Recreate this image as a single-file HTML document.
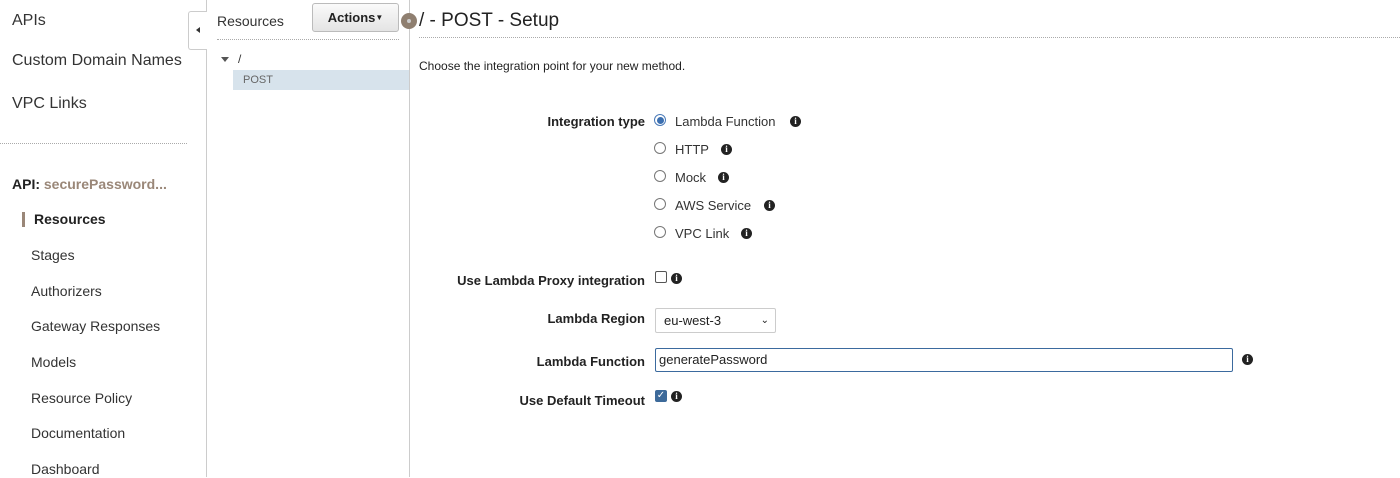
<!DOCTYPE html>
<html><head><meta charset="utf-8"><style>
*{margin:0;padding:0;box-sizing:border-box}
body{width:1400px;height:477px;overflow:hidden;background:#fff;font-family:"Liberation Sans",Arial,sans-serif;color:#222;position:relative}
.a{position:absolute;white-space:nowrap}
.nav{font-size:16px;line-height:20px;left:12px;color:#333}
.sub{font-size:14px;line-height:18px;left:31px;color:#333}
.lbl{font-size:13px;font-weight:bold;line-height:16px;right:755px;color:#222}
.opt{font-size:13px;line-height:16px;left:675px;color:#333}
.radio{position:absolute;width:12px;height:12px;border:1px solid #777;border-radius:50%;background:#fff;left:654px}
.info{position:absolute;width:11px;height:11px;border-radius:50%;background:#222;color:#fff;font-size:9px;font-weight:bold;line-height:11px;text-align:center;font-family:"Liberation Serif",serif}
</style></head><body>
<div class="a" style="left:206px;top:0;width:1px;height:477px;background:#ccc"></div>
<div class="a" style="left:188px;top:11px;width:19px;height:39px;border:1px solid #ccc;border-right:none;border-radius:3px 0 0 3px;background:#fff"></div>
<div class="a" style="left:196px;top:27px;width:0;height:0;border-top:3px solid transparent;border-bottom:3px solid transparent;border-right:4px solid #333"></div>
<div class="a nav" style="top:11px">APIs</div>
<div class="a nav" style="top:51px">Custom Domain Names</div>
<div class="a nav" style="top:94px">VPC Links</div>
<div class="a" style="left:0;top:143px;width:187px;border-top:1px dotted #aaa"></div>
<div class="a" style="left:12px;top:175px;font-size:14px;font-weight:bold;line-height:18px">API: <span style="color:#9a8778">securePassword...</span></div>
<div class="a" style="left:22px;top:212px;width:3px;height:15px;background:#9a8778"></div>
<div class="a sub" style="left:34px;top:210px;font-weight:bold;color:#222">Resources</div>
<div class="a sub" style="top:246px">Stages</div>
<div class="a sub" style="top:282px">Authorizers</div>
<div class="a sub" style="top:317px">Gateway Responses</div>
<div class="a sub" style="top:353px">Models</div>
<div class="a sub" style="top:389px">Resource Policy</div>
<div class="a sub" style="top:424px">Documentation</div>
<div class="a sub" style="top:460px">Dashboard</div>

<div class="a" style="left:409px;top:0;width:1px;height:477px;background:#ccc"></div>
<div class="a" style="left:217px;top:12px;font-size:14px;line-height:18px;color:#333">Resources</div>
<div class="a" style="left:312px;top:3px;width:87px;height:29px;border:1px solid #bbb;border-radius:3px;background:linear-gradient(#fafafa,#e4e4e4);font-size:13px;font-weight:bold;line-height:27px;text-align:center;color:#222">Actions<span style="font-size:8px;vertical-align:2px">▼</span></div>
<div class="a" style="left:217px;top:39px;width:182px;border-top:1px dotted #aaa"></div>
<div class="a" style="left:221px;top:57px;width:0;height:0;border-left:4px solid transparent;border-right:4px solid transparent;border-top:5px solid #555"></div>
<div class="a" style="left:238px;top:52px;font-size:12px;color:#333">/</div>
<div class="a" style="left:233px;top:70px;width:176px;height:20px;background:#d7e3ec"></div>
<div class="a" style="left:243px;top:73px;font-size:11px;line-height:14px;color:#666">POST</div>
<div class="a" style="left:401px;top:13px;width:16px;height:16px;border-radius:50%;background:#8f7f70"></div>
<div class="a" style="left:407px;top:19px;width:4px;height:4px;border-radius:50%;background:#ccc"></div>

<div class="a" style="left:419px;top:9px;font-size:19px;line-height:24px;color:#222">/ - POST - Setup</div>
<div class="a" style="left:419px;top:37px;width:981px;border-top:1px dotted #aaa"></div>
<div class="a" style="left:419px;top:58px;font-size:12px;line-height:16px;color:#222">Choose the integration point for your new method.</div>

<div class="a lbl" style="top:114px">Integration type</div>
<div class="radio" style="top:114px;border-color:#4a7ab8"></div><div class="a" style="left:657px;top:117px;width:7px;height:7px;border-radius:50%;background:#3b6fb0"></div>
<div class="a opt" style="top:114px">Lambda Function</div><div class="info" style="left:790px;top:116px">i</div>
<div class="radio" style="top:142px"></div><div class="a opt" style="top:142px">HTTP</div><div class="info" style="left:721px;top:144px">i</div>
<div class="radio" style="top:170px"></div><div class="a opt" style="top:170px">Mock</div><div class="info" style="left:718px;top:172px">i</div>
<div class="radio" style="top:198px"></div><div class="a opt" style="top:198px">AWS Service</div><div class="info" style="left:764px;top:200px">i</div>
<div class="radio" style="top:226px"></div><div class="a opt" style="top:226px">VPC Link</div><div class="info" style="left:741px;top:228px">i</div>

<div class="a lbl" style="top:273px">Use Lambda Proxy integration</div>
<div class="a" style="left:655px;top:271px;width:12px;height:12px;border:1px solid #555;border-radius:2px"></div>
<div class="info" style="left:671px;top:273px">i</div>

<div class="a lbl" style="top:311px">Lambda Region</div>
<div class="a" style="left:655px;top:308px;width:121px;height:25px;border:1px solid #ccc;border-radius:2px;font-size:13px;line-height:23px;padding-left:8px;color:#222">eu-west-3<span style="position:absolute;right:6px;top:0;font-size:10px">&#x2304;</span></div>

<div class="a lbl" style="top:354px">Lambda Function</div>
<div class="a" style="left:655px;top:348px;width:578px;height:24px;border:1px solid #3b6a9e;border-radius:2px;font-size:13px;line-height:22px;padding-left:3px;color:#222">generatePassword</div>
<div class="info" style="left:1242px;top:354px">i</div>

<div class="a lbl" style="top:393px">Use Default Timeout</div>
<div class="a" style="left:655px;top:390px;width:12px;height:12px;background:#3d6a9a;border-radius:2px;color:#fff;font-size:10px;line-height:12px;text-align:center">✓</div>
<div class="info" style="left:671px;top:391px">i</div>
</body></html>
